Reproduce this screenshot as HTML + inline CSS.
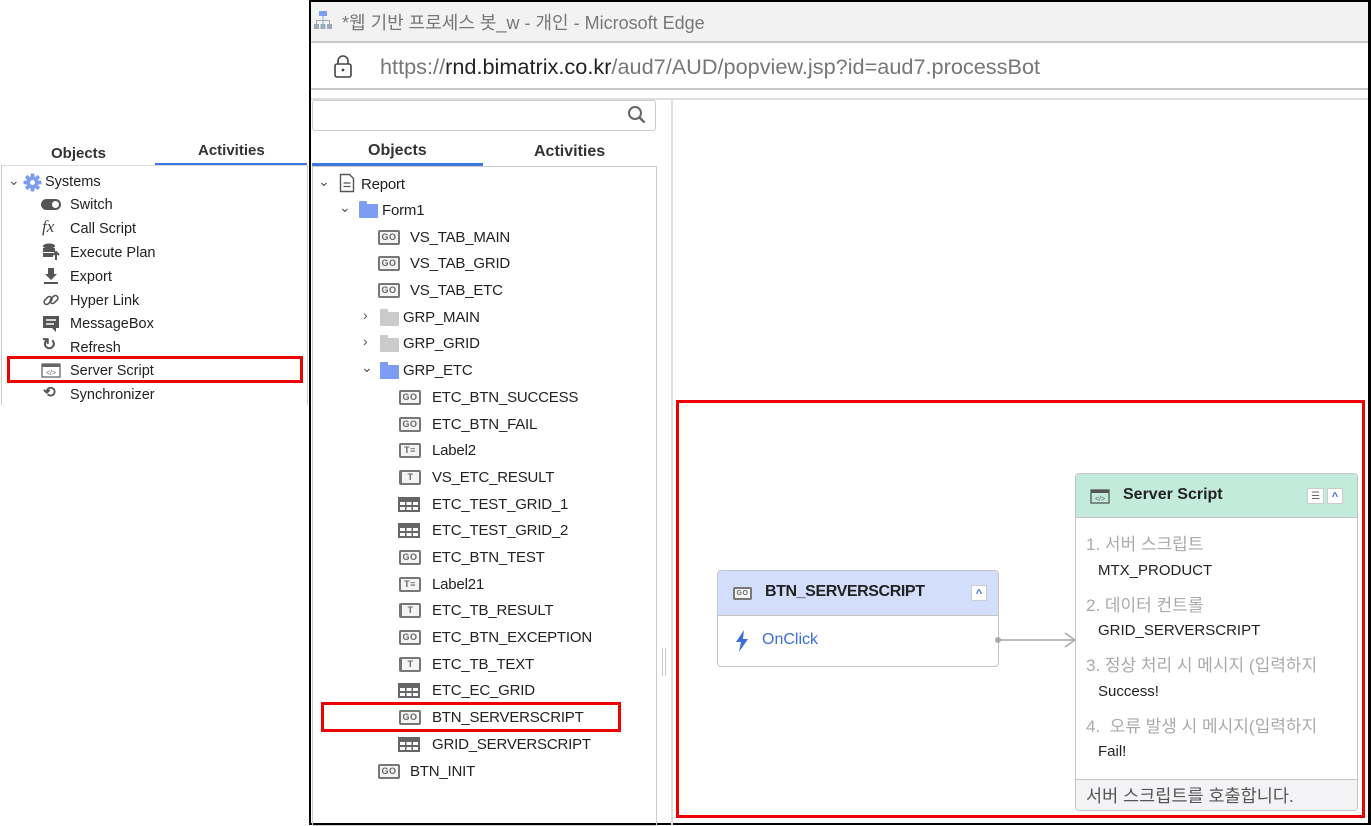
<!DOCTYPE html>
<html><head><meta charset="utf-8"><style>
*{box-sizing:border-box;margin:0;padding:0}
body{width:1371px;height:825px;overflow:hidden;background:#fff;position:relative;font-family:"Liberation Sans","Noto Sans CJK KR",sans-serif;color:#222}
.a{position:absolute;white-space:nowrap}
.go{position:absolute;width:22px;height:15px;border:2px solid #777;border-radius:2px;font-size:9px;font-weight:bold;color:#666;text-align:center;line-height:11px;letter-spacing:.5px;background:#f4f4f4}
.t{position:absolute;font-size:15px;color:#222;line-height:18px;letter-spacing:-0.2px}
.l{position:absolute;font-size:14.5px;color:#222;line-height:18px}
.fold{position:absolute;width:19px;height:14px;background:#7d9cf3;border-radius:1px}
.fold:before{content:"";position:absolute;left:0;top:-3px;width:8px;height:4px;background:inherit;border-radius:1px 1px 0 0}
.gray{background:#cbcbcb}
.chev{position:absolute;font-size:14px;color:#555}
</style></head><body>

<div class="a" style="left:51px;top:145px;font-size:15px;font-weight:bold;color:#333">Objects</div>
<div class="a" style="left:198px;top:142px;font-size:15px;font-weight:bold;color:#333">Activities</div>
<div class="a" style="left:155px;top:163px;width:152px;height:2px;background:#3c78e0"></div>
<div class="a" style="left:1px;top:165px;width:307px;height:240px;border-left:1px solid #ccc;border-right:1px solid #ccc;border-top:1px solid #ddd"></div>
<div class="a" style="left:8px;top:172px;font-size:14px;color:#555">⌄</div>
<svg class="a" style="left:23px;top:173px" width="19" height="19" viewBox="0 0 20 20"><g fill="#7d9cf3"><circle cx="10" cy="10" r="6.5"/><rect x="8" y="0.5" width="4" height="19" rx="1"/><rect x="0.5" y="8" width="19" height="4" rx="1"/><rect x="8" y="0.5" width="4" height="19" rx="1" transform="rotate(45 10 10)"/><rect x="8" y="0.5" width="4" height="19" rx="1" transform="rotate(-45 10 10)"/></g><circle cx="10" cy="10" r="2.6" fill="#fff"/></svg>
<div class="l" style="left:45px;top:173px">Systems</div>
<div class="a" style="left:41px;top:199px;width:20px;height:11px;background:#555;border-radius:6px"><div style="position:absolute;right:2px;top:2px;width:7px;height:7px;border-radius:50%;background:#fff"></div></div>
<div class="l" style="left:70px;top:196px">Switch</div>
<div class="a" style="left:42px;top:217px;font-family:'Liberation Serif',serif;font-style:italic;font-size:17px;color:#444">fx</div>
<div class="l" style="left:70px;top:220px">Call Script</div>
<svg class="a" style="left:42px;top:243px" width="18" height="18"><ellipse cx="7" cy="3" rx="6" ry="2.5" fill="#555"/><rect x="1" y="5" width="12" height="4" fill="#555"/><rect x="1" y="10" width="10" height="4" fill="#555"/><path d="M14 17V10M11 12l3-3 3 3" stroke="#555" stroke-width="2" fill="none"/></svg>
<div class="l" style="left:70px;top:244px">Execute Plan</div>
<svg class="a" style="left:42px;top:267px" width="18" height="18"><path d="M6 1h6v6h3l-6 6-6-6h3z" fill="#555"/><rect x="2" y="15" width="14" height="2" fill="#555"/></svg>
<div class="l" style="left:70px;top:268px">Export</div>
<svg class="a" style="left:42px;top:291px" width="18" height="18"><g stroke="#555" stroke-width="1.6" fill="none"><rect x="1.5" y="7" width="9" height="5" rx="2.5" transform="rotate(-45 6 9.5)"/><rect x="7.5" y="6" width="9" height="5" rx="2.5" transform="rotate(-45 12 8.5)"/></g></svg>
<div class="l" style="left:70px;top:292px">Hyper Link</div>
<svg class="a" style="left:42px;top:315px" width="18" height="18"><path d="M1 1h16v12h-3v4l-4-4H1z" fill="#555"/><path d="M4 5h10M4 9h8" stroke="#fff" stroke-width="1.5"/></svg>
<div class="l" style="left:70px;top:315px">MessageBox</div>
<div class="a" style="left:42px;top:335px;font-size:17px;font-weight:bold;color:#555">↻</div>
<div class="l" style="left:70px;top:339px">Refresh</div>
<div class="a" style="left:7px;top:356px;width:296px;height:27px;border:3px solid #e00"></div>
<svg class="a" style="left:41px;top:363px" width="20" height="15"><rect x="1" y="1" width="18" height="13" fill="none" stroke="#666" stroke-width="1.3"/><rect x="1" y="1" width="18" height="3" fill="#666"/><text x="10" y="12" font-size="7" text-anchor="middle" fill="#666" font-family="Liberation Sans">&lt;/&gt;</text></svg>
<div class="l" style="left:70px;top:362px">Server Script</div>
<div class="a" style="left:43px;top:383px;font-size:15px;font-weight:bold;color:#555">⟲</div>
<div class="l" style="left:70px;top:386px">Synchronizer</div>

<div class="a" style="left:309px;top:0;width:1062px;height:825px;border:2px solid #000;border-right-width:3px;background:#fff"></div>
<div class="a" style="left:311px;top:2px;width:1057px;height:41px;background:#f2f2f2;border-bottom:2px solid #c8c8c8"></div>
<svg class="a" style="left:314px;top:10px" width="18" height="20"><g fill="#9ab"><rect x="5" y="1" width="8" height="5" fill="#7d9cf3"/><rect x="0" y="14" width="5" height="5"/><rect x="6.5" y="14" width="5" height="5"/><rect x="13" y="14" width="5" height="5"/><rect x="8.5" y="6" width="1" height="4"/><rect x="2" y="10" width="14" height="1"/><rect x="2" y="10" width="1" height="4"/><rect x="15" y="10" width="1" height="4"/><rect x="8.5" y="10" width="1" height="4"/></g></svg>
<div class="a" style="left:342px;top:9px;font-size:18px;color:#777">*웹 기반 프로세스 봇_w - 개인 - Microsoft Edge</div>
<svg class="a" style="left:333px;top:55px" width="20" height="24"><rect x="2" y="9" width="16" height="13" rx="2" fill="none" stroke="#444" stroke-width="1.6"/><path d="M5 9V6a5 5 0 0 1 10 0v3" fill="none" stroke="#444" stroke-width="1.6"/><circle cx="10" cy="15" r="1.4" fill="#444"/></svg>
<div class="a" style="left:380px;top:54px;font-size:21.7px;color:#777">https://<span style="color:#222">rnd.bimatrix.co.kr</span>/aud7/AUD/popview.jsp?id=aud7.processBot</div>
<div class="a" style="left:311px;top:88px;width:1057px;height:2px;background:#c8c8c8"></div>
<div class="a" style="left:311px;top:98px;width:1057px;height:2px;background:#ddd"></div>

<div class="a" style="left:312px;top:100px;width:344px;height:31px;border:1px solid #ccc;border-radius:3px"></div>
<svg class="a" style="left:627px;top:105px" width="20" height="20"><circle cx="8" cy="8" r="6" fill="none" stroke="#666" stroke-width="2"/><path d="M12.5 12.5l5 5" stroke="#666" stroke-width="2.4"/></svg>
<div class="a" style="left:368px;top:142px;font-size:16px;font-weight:bold;color:#333">Objects</div>
<div class="a" style="left:534px;top:143px;font-size:16px;font-weight:bold;color:#333">Activities</div>
<div class="a" style="left:312px;top:163px;width:171px;height:3px;background:#3c78e0"></div>
<div class="a" style="left:312px;top:166px;width:345px;height:660px;border:1px solid #ccc"></div>
<div class="a" style="left:662px;top:648px;width:4px;height:28px;border-left:1px solid #ccc;border-right:1px solid #ccc"></div>
<div class="a" style="left:671px;top:99px;width:2px;height:726px;background:#ddd"></div>

<div class="chev" style="left:318px;top:173px">⌄</div>
<svg class="a" style="left:339px;top:173px" width="16" height="20"><path d="M1.5 1.5h9l4 4v13h-13z" fill="none" stroke="#555" stroke-width="1.4"/><path d="M4.5 10h7M4.5 13.5h7" stroke="#555" stroke-width="1.3"/></svg>
<div class="t" style="left:361px;top:176px">Report</div>
<div class="chev" style="left:339px;top:199px">⌄</div>
<div class="fold" style="left:359px;top:204px"></div>
<div class="t" style="left:382px;top:202px">Form1</div>

<div class="go" style="left:378px;top:230px">GO</div><div class="t" style="left:410px;top:229px">VS_TAB_MAIN</div>
<div class="go" style="left:378px;top:256px">GO</div><div class="t" style="left:410px;top:255px">VS_TAB_GRID</div>
<div class="go" style="left:378px;top:283px">GO</div><div class="t" style="left:410px;top:282px">VS_TAB_ETC</div>
<div class="chev" style="left:363px;top:307px">›</div><div class="fold gray" style="left:380px;top:312px"></div><div class="t" style="left:403px;top:309px">GRP_MAIN</div>
<div class="chev" style="left:363px;top:333px">›</div><div class="fold gray" style="left:380px;top:338px"></div><div class="t" style="left:403px;top:335px">GRP_GRID</div>
<div class="chev" style="left:361px;top:359px">⌄</div><div class="fold" style="left:380px;top:365px"></div><div class="t" style="left:403px;top:362px">GRP_ETC</div>

<div class="go" style="left:399px;top:390px">GO</div><div class="t" style="left:432px;top:389px">ETC_BTN_SUCCESS</div>
<div class="go" style="left:399px;top:417px">GO</div><div class="t" style="left:432px;top:416px">ETC_BTN_FAIL</div>
<div class="go" style="left:399px;top:443px">T≡</div><div class="t" style="left:432px;top:442px">Label2</div>
<div class="go" style="left:399px;top:470px;border-left-width:3px">T</div><div class="t" style="left:432px;top:469px">VS_ETC_RESULT</div>
<svg class="a" style="left:398px;top:497px" width="22" height="15"><rect x="0" y="0" width="22" height="15" fill="#666"/><g fill="#fff"><rect x="2" y="5" width="5" height="3"/><rect x="8.5" y="5" width="5" height="3"/><rect x="15" y="5" width="5" height="3"/><rect x="2" y="10" width="5" height="3"/><rect x="8.5" y="10" width="5" height="3"/><rect x="15" y="10" width="5" height="3"/></g></svg><div class="t" style="left:432px;top:496px">ETC_TEST_GRID_1</div>
<svg class="a" style="left:398px;top:523px" width="22" height="15"><rect x="0" y="0" width="22" height="15" fill="#666"/><g fill="#fff"><rect x="2" y="5" width="5" height="3"/><rect x="8.5" y="5" width="5" height="3"/><rect x="15" y="5" width="5" height="3"/><rect x="2" y="10" width="5" height="3"/><rect x="8.5" y="10" width="5" height="3"/><rect x="15" y="10" width="5" height="3"/></g></svg><div class="t" style="left:432px;top:522px">ETC_TEST_GRID_2</div>
<div class="go" style="left:399px;top:550px">GO</div><div class="t" style="left:432px;top:549px">ETC_BTN_TEST</div>
<div class="go" style="left:399px;top:577px">T≡</div><div class="t" style="left:432px;top:576px">Label21</div>
<div class="go" style="left:399px;top:603px;border-left-width:3px">T</div><div class="t" style="left:432px;top:602px">ETC_TB_RESULT</div>
<div class="go" style="left:399px;top:630px">GO</div><div class="t" style="left:432px;top:629px">ETC_BTN_EXCEPTION</div>
<div class="go" style="left:399px;top:657px;border-left-width:3px">T</div><div class="t" style="left:432px;top:656px">ETC_TB_TEXT</div>
<svg class="a" style="left:398px;top:683px" width="22" height="15"><rect x="0" y="0" width="22" height="15" fill="#666"/><g fill="#fff"><rect x="2" y="5" width="5" height="3"/><rect x="8.5" y="5" width="5" height="3"/><rect x="15" y="5" width="5" height="3"/><rect x="2" y="10" width="5" height="3"/><rect x="8.5" y="10" width="5" height="3"/><rect x="15" y="10" width="5" height="3"/></g></svg><div class="t" style="left:432px;top:682px">ETC_EC_GRID</div>
<div class="a" style="left:321px;top:702px;width:300px;height:30px;border:3px solid #e00"></div>
<div class="go" style="left:399px;top:710px">GO</div><div class="t" style="left:432px;top:709px">BTN_SERVERSCRIPT</div>
<svg class="a" style="left:398px;top:737px" width="22" height="15"><rect x="0" y="0" width="22" height="15" fill="#666"/><g fill="#fff"><rect x="2" y="5" width="5" height="3"/><rect x="8.5" y="5" width="5" height="3"/><rect x="15" y="5" width="5" height="3"/><rect x="2" y="10" width="5" height="3"/><rect x="8.5" y="10" width="5" height="3"/><rect x="15" y="10" width="5" height="3"/></g></svg><div class="t" style="left:432px;top:736px">GRID_SERVERSCRIPT</div>
<div class="go" style="left:378px;top:764px">GO</div><div class="t" style="left:410px;top:763px">BTN_INIT</div>

<div class="a" style="left:676px;top:400px;width:689px;height:418px;border:3px solid #e00"></div>

<div class="a" style="left:717px;top:570px;width:282px;height:97px;border:1.5px solid #c4c4c4;border-radius:4px;background:#fff;overflow:hidden">
 <div style="position:absolute;left:0;top:0;width:100%;height:45px;background:#d3defc;border-bottom:1.5px solid #c4c4c4"></div>
 <div class="go" style="left:15px;top:16px;width:19px;height:13px;font-size:7px;line-height:9px">GO</div>
 <div class="a" style="left:47px;top:12px;font-size:16px;font-weight:bold;color:#222;letter-spacing:-0.4px">BTN_SERVERSCRIPT</div>
 <div class="a" style="left:253px;top:14px;width:16px;height:16px;background:#fff;border:1px solid #ccc;color:#3c6ee0;font-size:11px;text-align:center;line-height:16px;font-weight:bold">^</div>
 <svg class="a" style="left:17px;top:59px" width="14" height="22"><path d="M9 0L1 12h5l-2 10 9-13H8z" fill="#3c6ee0"/></svg>
 <div class="a" style="left:44px;top:60px;font-size:16px;color:#3c6ee0">OnClick</div>
</div>
<div class="a" style="left:998px;top:639px;width:77px;height:1.5px;background:#bbb"></div>
<div class="a" style="left:995px;top:637px;width:6px;height:6px;border-radius:50%;background:#aaa"></div>
<svg class="a" style="left:1064px;top:632px" width="12" height="16"><path d="M1 1l10 7-10 7" fill="none" stroke="#aaa" stroke-width="1.5"/></svg>

<div class="a" style="left:1075px;top:473px;width:283px;height:338px;border:1.5px solid #c4c4c4;border-radius:4px;background:#fff;overflow:hidden">
 <div style="position:absolute;left:0;top:0;width:100%;height:44px;background:#c3ebdc;border-bottom:1.5px solid #c4c4c4"></div>
 <svg class="a" style="left:14px;top:15px" width="20" height="15"><rect x="1" y="1" width="18" height="13" fill="none" stroke="#555" stroke-width="1.3"/><rect x="1" y="1" width="18" height="3" fill="#555"/><text x="10" y="12" font-size="7" text-anchor="middle" fill="#555" font-family="Liberation Sans">&lt;/&gt;</text></svg>
 <div class="a" style="left:47px;top:12px;font-size:16px;font-weight:bold;color:#222">Server Script</div>
 <div class="a" style="left:231px;top:14px;width:17px;height:16px;background:#fff;border:1px solid #ccc;font-size:10px;color:#666;text-align:center;line-height:15px">☰</div>
 <div class="a" style="left:251px;top:14px;width:16px;height:16px;background:#fff;border:1px solid #ccc;color:#3c6ee0;font-size:11px;text-align:center;line-height:16px;font-weight:bold">^</div>
 <div class="a" style="left:10px;top:56px;font-size:17px;color:#aaa">1. 서버 스크립트</div>
 <div class="a" style="left:22px;top:88px;font-size:15px;color:#222">MTX_PRODUCT</div>
 <div class="a" style="left:10px;top:117px;font-size:17px;color:#aaa">2. 데이터 컨트롤</div>
 <div class="a" style="left:22px;top:148px;font-size:15px;color:#222">GRID_SERVERSCRIPT</div>
 <div class="a" style="left:10px;top:177px;font-size:17px;color:#aaa">3. 정상 처리 시 메시지 (입력하지</div>
 <div class="a" style="left:22px;top:209px;font-size:15px;color:#222">Success!</div>
 <div class="a" style="left:10px;top:238px;font-size:17px;color:#aaa">4.&nbsp; 오류 발생 시 메시지(입력하지</div>
 <div class="a" style="left:22px;top:269px;font-size:15px;color:#222">Fail!</div>
 <div style="position:absolute;left:0;top:305px;width:100%;height:33px;background:#f3f3f6;border-top:1.5px solid #c4c4c4"></div>
 <div class="a" style="left:10px;top:309px;font-size:17.5px;color:#555">서버 스크립트를 호출합니다.</div>
</div>
</body></html>
